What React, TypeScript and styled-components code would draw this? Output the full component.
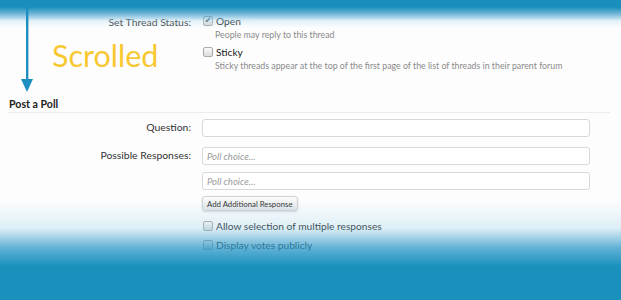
import styled, { createGlobalStyle } from "styled-components";

const GlobalStyle = createGlobalStyle`
  html, body {
    margin: 0;
    padding: 0;
    background: #fdfdfe;
  }
  * {
    box-sizing: border-box;
  }
`;

export default function App() {
  return (
    <Page>
      <GlobalStyle />
      <Content>
        <Row $top={14}>
          <Label>Set Thread Status:</Label>
          <Field>
            <CheckLine>
              <Box $checked>✔</Box>
              <CheckText>Open</CheckText>
            </CheckLine>
            <Hint>People may reply to this thread</Hint>
            <CheckLine $gap={4}>
              <Box />
              <CheckText>Sticky</CheckText>
            </CheckLine>
            <Hint>
              Sticky threads appear at the top of the first page of the list of
              threads in their parent forum
            </Hint>
          </Field>
        </Row>

        <SectionTitle>Post a Poll</SectionTitle>

        <Row $top={6}>
          <Label>Question:</Label>
          <Field>
            <TextInput />
          </Field>
        </Row>
        <Row $top={10}>
          <Label>Possible Responses:</Label>
          <Field>
            <TextInput placeholder="Poll choice..." />
          </Field>
        </Row>
        <Row $top={7}>
          <Label />
          <Field>
            <TextInput placeholder="Poll choice..." />
            <SmallButton>Add Additional Response</SmallButton>
            <CheckLine $gap={8}>
              <Box />
              <CheckText>Allow selection of multiple responses</CheckText>
            </CheckLine>
            <CheckLine $gap={5}>
              <Box />
              <CheckText>Display votes publicly</CheckText>
            </CheckLine>
          </Field>
        </Row>
      </Content>

      <TopFade />
      <BottomFade />

      <Arrow width="14" height="92" viewBox="0 0 14 92">
        <rect x="6" y="4" width="2.4" height="78" fill="#1d8fc0" />
        <polygon points="1,79 13,79 7,92" fill="#1d8fc0" />
      </Arrow>
      <Scrolled>Scrolled</Scrolled>
    </Page>
  );
}

const Page = styled.div`
  position: relative;
  width: 621px;
  height: 300px;
  overflow: hidden;
  background: #fdfdfe;
  font-family: "Lato", "Liberation Sans", sans-serif;
  color: #2b2b2b;
`;

const Content = styled.div`
  display: flex;
  flex-direction: column;
  padding: 0 32px 0 8px;
`;

const Row = styled.div<{ $top?: number }>`
  display: grid;
  grid-template-columns: 183px 1fr;
  column-gap: 11px;
  margin-top: ${(p) => p.$top ?? 0}px;
`;

const Label = styled.div`
  text-align: right;
  font-size: 10.4px;
  line-height: 17px;
  color: #333;
`;

const Field = styled.div`
  display: flex;
  flex-direction: column;
  align-items: flex-start;
`;

const CheckLine = styled.label<{ $gap?: number }>`
  display: flex;
  align-items: center;
  gap: 3px;
  margin-top: ${(p) => p.$gap ?? 0}px;
  height: 14px;
`;

const Box = styled.span<{ $checked?: boolean }>`
  width: 10px;
  height: 10px;
  margin-left: 1px;
  border: 1px solid #a9a9a9;
  border-radius: 2px;
  background: linear-gradient(#fafafa, #dcdcdc);
  color: #3c4a5a;
  font-size: 8px;
  line-height: 8px;
  text-align: center;
  font-family: "DejaVu Sans", sans-serif;
  ${(p) => (p.$checked ? "" : "color: transparent;")}
`;

const CheckText = styled.span`
  font-size: 10.2px;
  color: #222;
`;

const Hint = styled.div`
  font-size: 8.8px;
  color: #8a8a8a;
  margin: 1px 0 0 13px;
  line-height: 12px;
`;

const SectionTitle = styled.div`
  margin-top: 26px;
  padding: 0 0 2px 1px;
  font-size: 10.6px;
  font-weight: bold;
  color: #222;
  border-bottom: 1px solid #e6eef3;
  margin-right: -21px;
`;

const TextInput = styled.input`
  width: 388px;
  height: 18px;
  border: 1px solid #d8d8d8;
  border-radius: 3px;
  background: #fff;
  padding: 0 4px;
  font-family: "Lato", "Liberation Sans", sans-serif;
  font-size: 9.5px;
  outline: none;
  &::placeholder {
    color: #9a9a9a;
    font-style: italic;
  }
`;

const SmallButton = styled.button`
  margin-top: 6px;
  height: 15px;
  padding: 0 4px;
  border: 1px solid #cfd3d6;
  border-radius: 3px;
  background: linear-gradient(#fbfbfb, #e3e5e7);
  box-shadow: 0 1px 2px rgba(0, 0, 0, 0.15);
  font-family: "Lato", "Liberation Sans", sans-serif;
  font-size: 7.8px;
  color: #333;
`;

const TopFade = styled.div`
  position: absolute;
  top: 0;
  left: 0;
  right: 0;
  height: 28px;
  background: linear-gradient(
    #1a8fbd 0%,
    #1a8fbd 25%,
    rgba(70, 160, 205, 0.75) 50%,
    rgba(180, 220, 238, 0.35) 75%,
    rgba(255, 255, 255, 0) 100%
  );
  pointer-events: none;
`;

const BottomFade = styled.div`
  position: absolute;
  left: 0;
  right: 0;
  top: 200px;
  bottom: 0;
  background: linear-gradient(
    rgba(255, 255, 255, 0) 0%,
    rgba(150, 205, 228, 0.3) 28%,
    rgba(45, 152, 200, 0.75) 48%,
    #1a91bd 66%,
    #1a91bd 100%
  );
  pointer-events: none;
`;

const Arrow = styled.svg`
  position: absolute;
  left: 20px;
  top: 0;
`;

const Scrolled = styled.div`
  position: absolute;
  left: 52px;
  top: 37px;
  font-family: "Lato", sans-serif;
  font-size: 30.5px;
  color: #f7c830;
`;
